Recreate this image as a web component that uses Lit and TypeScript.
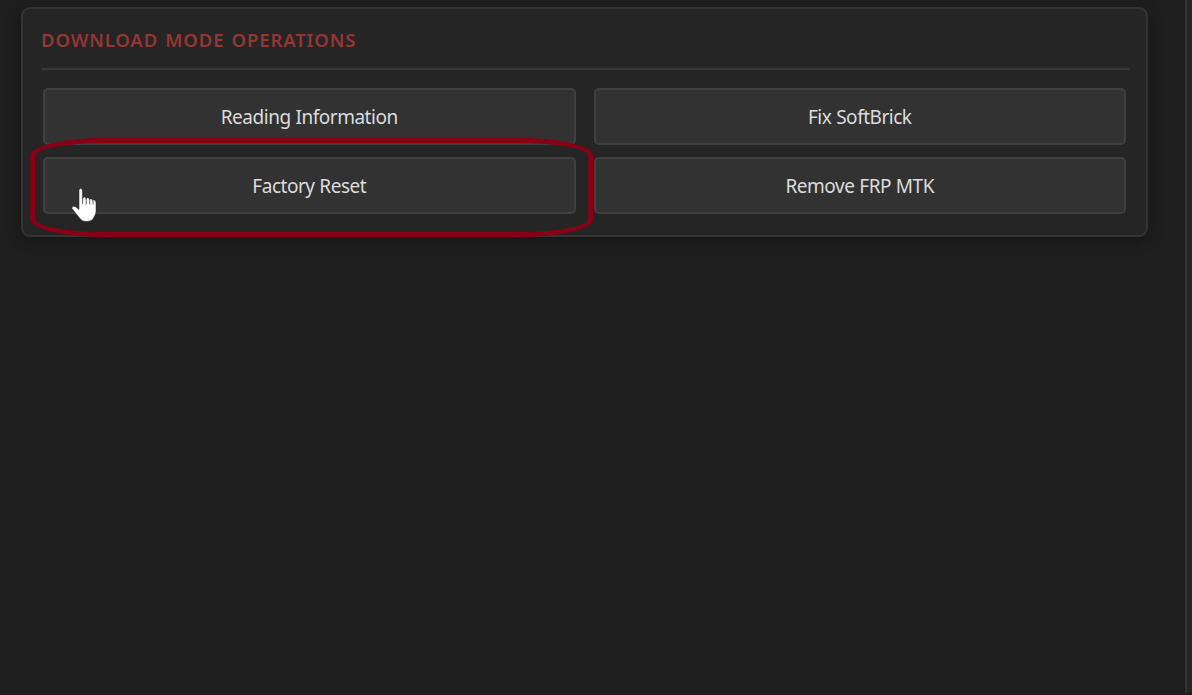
import { LitElement, html, css } from "lit";
import { customElement } from "lit/decorators.js";

@customElement("app-root")
export class AppRoot extends LitElement {
  static styles = css`
    :host {
      display: flex;
      position: relative;
      box-sizing: border-box;
      width: 100%;
      height: 695px;
      overflow: hidden;
      background: #1e1e1e;
      border-bottom: 2px solid #221c1e;
      font-family: "Noto Sans", "Open Sans", sans-serif;
    }
    .page {
      flex: 1;
      padding: 7px 37px 0 21px;
    }
    .edge {
      width: 5px;
      background: #252525;
      border-left: 2px solid #343434;
    }
    .panel {
      box-sizing: border-box;
      height: 230px;
      padding: 0 17px 0 18px;
      border: 2px solid #343434;
      border-radius: 9px;
      background: #252525;
      box-shadow: 0 3px 14px rgba(0, 0, 0, 0.3);
    }
    .title {
      box-sizing: border-box;
      height: 61px;
      margin: 0 0 18px;
      border-bottom: 2px solid #363636;
      color: #963634;
      font-size: 18.5px;
      font-weight: 600;
      line-height: 61px;
      letter-spacing: 0.87px;
      word-spacing: 1.5px;
      white-space: nowrap;
    }
    .grid {
      display: grid;
      grid-template-columns: 1fr 1fr;
      grid-auto-rows: 57px;
      gap: 12px 18px;
      padding: 0 3px 0 2px;
    }
    .action {
      box-sizing: border-box;
      margin: 0;
      padding: 0;
      border: 2px solid #404040;
      border-radius: 5px;
      background: #323232;
      color: #dcdcdc;
      font: inherit;
      font-size: 19px;
      letter-spacing: -0.48px;
      word-spacing: 0.4px;
      white-space: nowrap;
    }
    .ring {
      position: absolute;
      box-sizing: border-box;
      left: 30px;
      top: 138px;
      width: 563px;
      height: 99px;
      border: 5px solid #880015;
      border-radius: 74px / 18px;
    }
    .pointer {
      position: absolute;
      left: 70px;
      top: 186px;
    }
  `;

  private actions = ["Reading Information", "Fix SoftBrick", "Factory Reset", "Remove FRP MTK"];

  render() {
    return html`
      <main class="page">
        <section class="panel">
          <h2 class="title">DOWNLOAD MODE OPERATIONS</h2>
          <div class="grid">
            ${this.actions.map((a) => html`<button class="action">${a}</button>`)}
          </div>
        </section>
      </main>
      <div class="edge"></div>
      <div class="ring"></div>
      <svg class="pointer" width="28" height="38" viewBox="0 0 28 38">
        <path
          d="M9 4.5Q9 2.5 10.7 2.5T12.4 4.5V13.5Q12.6 11 14.4 11T16 13.2Q16.2 11.7 17.8 11.7T19.5 13.9Q19.8 12.8 21.1 12.8T22.6 14.8Q23 13.8 24.3 14T26 16.5V26Q25.5 29 23.5 32Q22 35.5 16 35.5Q12 35.5 9.5 32L2 22.5Q1.5 20.5 3.5 20.2Q5.2 20 9 23.5Z"
          fill="#fff"
          stroke="#222"
          stroke-width=".5"
        />
        <path d="M12.6 12V18M16.2 13V18.5M19.7 14V18.5M23 15V18.5" stroke="#555" stroke-width=".9" />
      </svg>
    `;
  }
}
